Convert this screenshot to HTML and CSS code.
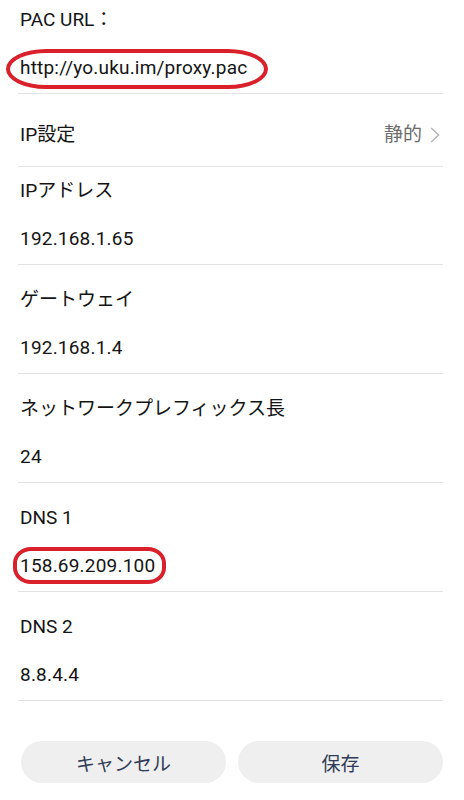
FILE: index.html
```html
<!DOCTYPE html>
<html lang="ja">
<head>
<meta charset="utf-8">
<title>IP設定</title>
<link rel="stylesheet" href="styles.css">
</head>
<body>
<div class="screen">
  <div class="list">
    <div class="item item-pac">
      <div class="line">PAC URL：</div>
      <div class="line value">http://yo.uku.im/proxy.pac<span class="mark mark-url"></span></div>
    </div>
    <div class="row">
      <div class="line">IP設定</div>
      <div class="row-end">
        <span class="row-value">静的</span>
        <svg class="chev" width="10" height="16" viewBox="0 0 10 16"><path d="M1.2 1 L8.6 8 L1.2 15" fill="none" stroke="#b4b4b4" stroke-width="1.5"/></svg>
      </div>
    </div>
    <div class="item item-first">
      <div class="line">IPアドレス</div>
      <div class="line value">192.168.1.65</div>
    </div>
    <div class="item">
      <div class="line">ゲートウェイ</div>
      <div class="line value">192.168.1.4</div>
    </div>
    <div class="item">
      <div class="line">ネットワークプレフィックス長</div>
      <div class="line value">24</div>
    </div>
    <div class="item">
      <div class="line">DNS 1</div>
      <div class="line value">158.69.209.100<span class="mark mark-dns"></span></div>
    </div>
    <div class="item">
      <div class="line">DNS 2</div>
      <div class="line value">8.8.4.4</div>
    </div>
  </div>
  <div class="buttons">
    <button class="btn">キャンセル</button>
    <button class="btn">保存</button>
  </div>
</div>
</body>
</html>
```

FILE: styles.css
```css
* { box-sizing: border-box; }
html, body { margin: 0; padding: 0; background: #ffffff; }
body {
  font-family: "Roboto", "Noto Sans CJK JP", sans-serif;
  font-size: 19px;
  color: #141414;
}
.screen { width: 464px; height: 800px; overflow: hidden; }
.list { margin: 0 21px 0 18px; }
.item {
  display: flex;
  flex-direction: column;
  gap: 22px;
  padding: 22px 0 12px 2px;
  border-bottom: 1px solid #e3e3e3;
}
.item-pac { padding-top: 7px; }
.item-first { padding-top: 11px; }
.line {
  height: 26px;
  line-height: 26px;
  white-space: nowrap;
}
.value { position: relative; align-self: flex-start; letter-spacing: 0.2px; }
.row {
  display: flex;
  justify-content: space-between;
  align-items: center;
  padding: 28px 3px 18px 2px;
  border-bottom: 1px solid #e3e3e3;
}
.row-end { display: flex; align-items: center; gap: 8px; height: 26px; }
.row-value { color: #6c6c6c; line-height: 26px; }
.chev { display: block; }
.mark {
  position: absolute;
  border: 4px solid #d9202b;
  pointer-events: none;
}
.mark-url {
  left: -14px;
  top: -6px;
  width: 262px;
  height: 40px;
  border-radius: 40px / 20px;
}
.mark-dns {
  left: -7px;
  top: -6px;
  width: 153px;
  height: 37px;
  border-radius: 18px / 16px;
}
.buttons {
  display: flex;
  gap: 12px;
  margin: 40px 21px 0 21px;
}
.btn {
  flex: 1;
  height: 42px;
  border: none;
  border-radius: 21px;
  background: #efefef;
  color: #303b58;
  font-family: "Roboto", "Noto Sans CJK JP", sans-serif;
  font-size: 19px;
  padding: 0;
}
```
